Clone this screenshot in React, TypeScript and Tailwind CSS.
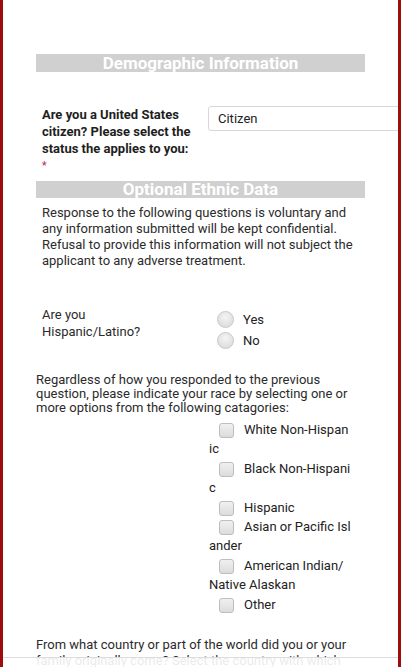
import React from "react";

const Radio = ({ label }: { label: string }) => (
  <div className="flex h-[21px] items-center">
    <span className="ml-[-1px] inline-block h-[17px] w-[17px] rounded-full border border-[#c8c8c8] bg-[radial-gradient(circle_at_50%_35%,#f4f4f4,#d6d6d6)]" />
    <span className="ml-[9px] text-[13px] text-[#222]">{label}</span>
  </div>
);

const Box = () => (
  <span className="mx-[10px] inline-block h-[15px] w-[15px] rounded-[3px] border border-[#bdbdbd] bg-[linear-gradient(#f0f0f0,#dcdcdc)] align-middle" />
);

const races: string[][] = [
  ["White Non-Hispan", "ic"],
  ["Black Non-Hispani", "c"],
  ["Hispanic"],
  ["Asian or Pacific Isl", "ander"],
  ["American Indian/", "Native Alaskan"],
  ["Other"],
];

export default function App() {
  return (
    <div className="relative h-[667px] overflow-hidden border-x-[3px] border-[#9e0c0c] bg-white font-['Roboto',sans-serif] text-[13px]">
      <div className="pt-[54px]">
        {/* Demographic header */}
        <div className="mx-[33px] h-[18px] bg-[#d0d0d0] text-center text-[17px] font-bold leading-[18px] text-white">
          Demographic Information
        </div>

        {/* Citizenship */}
        <div className="mt-[34px] flex">
          <div className="ml-[39px] w-[166px] shrink-0 font-bold leading-[17px] text-[#1e1e1e]">
            Are you a United States
            <br />
            citizen? Please select the
            <br />
            status the applies to you:
            <div className="text-[10px] text-[#c0395a]">*</div>
          </div>
          <div className="flex h-[25px] w-[220px] shrink-0 items-center rounded-[3px] border border-[#d8d8d8] pl-[9px] text-[#222]">
            Citizen
          </div>
        </div>

        {/* Ethnic header */}
        <div className="mx-[33px] mt-[7px] h-[17px] bg-[#d0d0d0] text-center text-[17px] font-bold leading-[17px] text-white">
          Optional Ethnic Data
        </div>

        <p className="ml-[39px] mt-[7px] leading-[16px] text-[#2b2b2b]">
          Response to the following questions is voluntary and
          <br />
          any information submitted will be kept confidential.
          <br />
          Refusal to provide this information will not subject the
          <br />
          applicant to any adverse treatment.
        </p>

        {/* Hispanic */}
        <div className="mt-[37px] flex">
          <div className="ml-[39px] w-[176px] shrink-0 leading-[17px] text-[#2b2b2b]">
            Are you
            <br />
            Hispanic/Latino?
          </div>
          <div className="pt-[3px]">
            <Radio label="Yes" />
            <Radio label="No" />
          </div>
        </div>

        <p className="ml-[33px] mt-[22px] leading-[14px] text-[#2b2b2b]">
          Regardless of how you responded to the previous
          <br />
          question, please indicate your race by selecting one or
          <br />
          more options from the following catagories:
        </p>

        {/* Race checkboxes */}
        <div className="ml-[206px] mt-[5px] leading-[19.4px] text-[#222]">
          {races.map((r) => (
            <div key={r[0]}>
              <Box />
              {r[0]}
              {r[1] && (
                <>
                  <br />
                  {r[1]}
                </>
              )}
            </div>
          ))}
        </div>

        <p className="ml-[33px] mt-[23px] leading-[16px] text-[#2b2b2b]">
          From what country or part of the world did you or your
          <br />
          family originally come? Select the country with which
        </p>
      </div>

      <div className="absolute inset-x-0 bottom-0 top-[657px] border-t border-[#dcdcdc] bg-white/90" />
    </div>
  );
}
